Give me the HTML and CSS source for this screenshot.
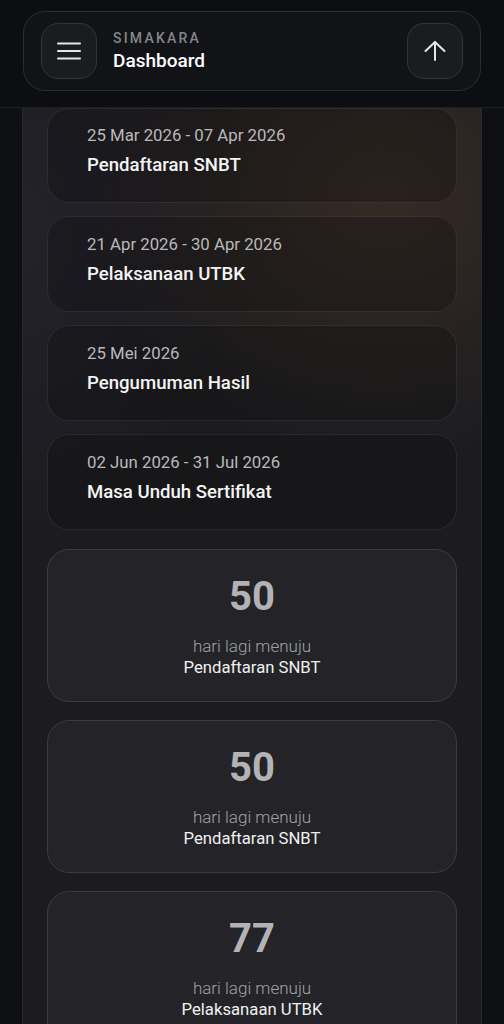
FILE: index.html
```html
<!DOCTYPE html>
<html lang="id">
<head>
    <meta charset="UTF-8">
    <meta name="viewport" content="width=device-width, initial-scale=1.0">
    <title>SIMAKARA - Dashboard</title>
    <link rel="stylesheet" href="styles.css">
</head>
<body>
    <header class="topbar">
        <div class="topbar-card">
            <button class="icon-btn" aria-label="Menu">
                <svg width="26" height="26" viewBox="0 0 26 26" fill="none" stroke="#e6e6e6" stroke-width="2" stroke-linecap="round">
                    <line x1="2" y1="5.5" x2="24" y2="5.5"/>
                    <line x1="2" y1="13" x2="24" y2="13"/>
                    <line x1="2" y1="20.5" x2="24" y2="20.5"/>
                </svg>
            </button>
            <div class="brand">
                <span class="brand-name">SIMAKARA</span>
                <span class="brand-page">Dashboard</span>
            </div>
            <button class="icon-btn" aria-label="Ke atas">
                <svg width="24" height="24" viewBox="0 0 24 24" fill="none" stroke="#e6e6e6" stroke-width="2" stroke-linecap="round" stroke-linejoin="round">
                    <line x1="12" y1="21" x2="12" y2="3"/>
                    <polyline points="2.5,12 12,3 21.5,12"/>
                </svg>
            </button>
        </div>
    </header>

    <main class="panel">
        <!-- jadwal -->
        <div class="timeline">
            <div class="event">
                <span class="event-date">25 Mar 2026 - 07 Apr 2026</span>
                <span class="event-title">Pendaftaran SNBT</span>
            </div>
            <div class="event">
                <span class="event-date">21 Apr 2026 - 30 Apr 2026</span>
                <span class="event-title">Pelaksanaan UTBK</span>
            </div>
            <div class="event">
                <span class="event-date">25 Mei 2026</span>
                <span class="event-title">Pengumuman Hasil</span>
            </div>
            <div class="event">
                <span class="event-date">02 Jun 2026 - 31 Jul 2026</span>
                <span class="event-title">Masa Unduh Sertifikat</span>
            </div>
        </div>

        <!-- hitung mundur -->
        <div class="countdowns">
            <div class="countdown">
                <span class="count">50</span>
                <span class="count-label">hari lagi menuju</span>
                <span class="count-target">Pendaftaran SNBT</span>
            </div>
            <div class="countdown">
                <span class="count">50</span>
                <span class="count-label">hari lagi menuju</span>
                <span class="count-target">Pendaftaran SNBT</span>
            </div>
            <div class="countdown">
                <span class="count">77</span>
                <span class="count-label">hari lagi menuju</span>
                <span class="count-target">Pelaksanaan UTBK</span>
            </div>
        </div>
    </main>
</body>
</html>
```

FILE: styles.css
```css
body {
    margin: 0;
    font-family: 'Roboto', 'Noto Sans', sans-serif;
    background: #0f1013;
    color: #f2f2f2;
}
.topbar {
    position: sticky;
    top: 0;
    z-index: 5;
    height: 108px;
    box-sizing: border-box;
    padding: 11px 23px 0;
    background: #0d0e11;
    border-bottom: 1px solid #1e1f23;
}
.topbar-card {
    height: 80px;
    box-sizing: border-box;
    display: flex;
    align-items: center;
    padding: 0 17px;
    gap: 16px;
    background: #121317;
    border: 1px solid #2b2c31;
    border-radius: 22px;
}
.icon-btn {
    width: 56px;
    height: 56px;
    flex-shrink: 0;
    display: flex;
    align-items: center;
    justify-content: center;
    padding: 0;
    background: #1b1c20;
    border: 1px solid #33343a;
    border-radius: 17px;
}
.brand {
    flex: 1;
    display: flex;
    flex-direction: column;
    gap: 2px;
}
.brand-name {
    font-size: 14px;
    font-weight: 500;
    letter-spacing: 2.2px;
    color: #85868b;
    line-height: 17px;
}
.brand-page {
    font-size: 19px;
    font-weight: 500;
    color: #ffffff;
    line-height: 24px;
}

.panel {
    margin: 0 22px;
    padding: 0 24px 40px;
    min-height: 1000px;
    border-left: 1px solid #28292e;
    border-right: 1px solid #28292e;
    background:
        radial-gradient(ellipse 300px 260px at 360px 90px, rgba(120, 80, 45, 0.28), transparent),
        radial-gradient(ellipse 200px 300px at 0 120px, rgba(70, 55, 90, 0.18), transparent),
        #1c1c20;
}
.timeline {
    display: flex;
    flex-direction: column;
    gap: 13px;
}
.event {
    height: 96px;
    box-sizing: border-box;
    display: flex;
    flex-direction: column;
    gap: 8px;
    padding: 17px 39px 0;
    background: rgba(10, 10, 12, 0.28);
    border: 1px solid rgba(255, 255, 255, 0.08);
    border-radius: 22px;
}
.event:first-child {
    height: 95px;
    padding-top: 16px;
}
.event-date {
    font-size: 16.8px;
    line-height: 20px;
    color: #b9b9bb;
}
.event-title {
    font-size: 18.6px;
    font-weight: 500;
    line-height: 24px;
    color: #f4f4f4;
}
.countdowns {
    display: flex;
    flex-direction: column;
    gap: 18px;
    margin-top: 19px;
}
.countdown {
    height: 153px;
    box-sizing: border-box;
    display: flex;
    flex-direction: column;
    align-items: center;
    padding-top: 23px;
    background: #242428;
    border: 1px solid #3a3a3f;
    border-radius: 22px;
}
.count {
    font-size: 40px;
    font-weight: 700;
    line-height: 48px;
    color: #b3b3b5;
}
.count-label {
    margin-top: 15px;
    font-size: 17px;
    font-weight: 300;
    line-height: 20px;
    color: #a2a2a5;
}
.count-target {
    margin-top: 2px;
    font-size: 16.7px;
    line-height: 20px;
    color: #f0f0f0;
}
```
